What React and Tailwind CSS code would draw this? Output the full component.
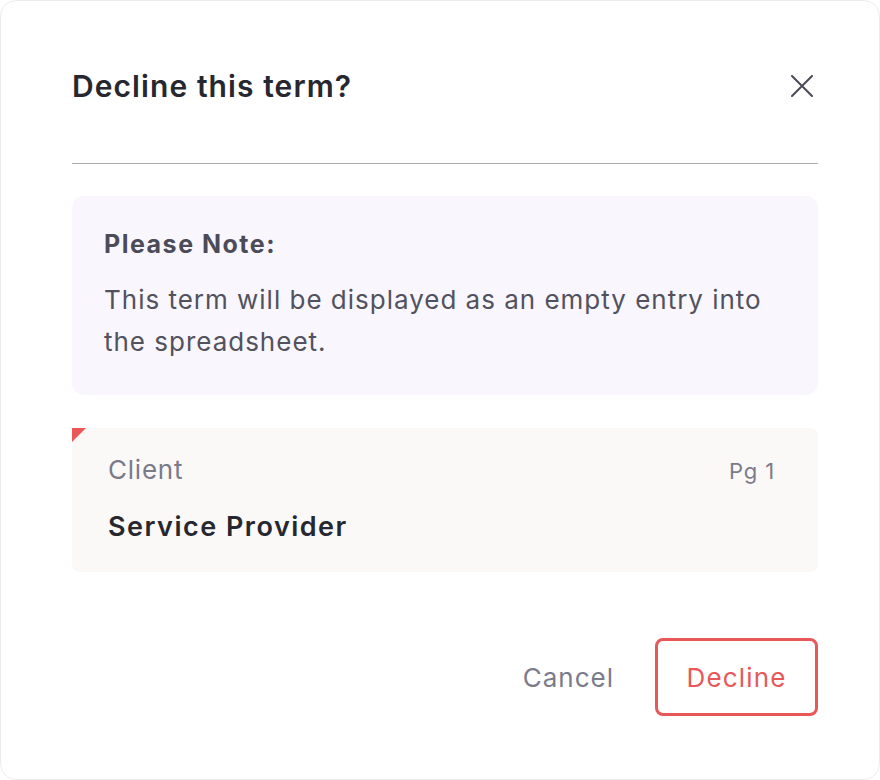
export default function App() {
  return (
    <div className="min-h-screen bg-white tracking-[0.048em]" style={{ fontFamily: "Inter, 'Noto Sans', sans-serif" }}>
      <div className="w-[880px] h-[780px] bg-white rounded-[16px] border border-[#ececec] pl-[71px] pr-[61px] pt-[67px] flex flex-col">
        {/* Header */}
        <div className="flex items-center justify-between">
          <h2 className="text-[30px] leading-[36px] font-semibold tracking-[0.036em] text-[#27272f]">
            Decline this term?
          </h2>
          <button type="button" className="mr-[5px] text-[#4a4a58]">
            <svg width="22" height="22" viewBox="0 0 22 22" fill="none" stroke="currentColor" strokeWidth="2" strokeLinecap="round">
              <path d="M1 1L21 21M21 1L1 21" />
            </svg>
          </button>
        </div>

        <div className="mt-[59px] h-px bg-[#a9a9b0]" />

        {/* Note */}
        <div className="mt-[32px] bg-[#f9f6fd] rounded-[12px] px-[32px] pt-[32px] pb-[32px]">
          <p className="text-[25px] leading-[32px] font-bold tracking-[0.06em] text-[#4b4b59]">Please Note:</p>
          <p className="mt-[19px] text-[26px] leading-[42px] tracking-[0.038em] text-[#52525e]">
            This term will be displayed as an empty entry into the spreadsheet.
          </p>
        </div>

        {/* Term card */}
        <div className="relative mt-[33px] bg-[#faf9f8] rounded-[8px] pl-[36px] pr-[43px] pt-[24px] pb-[27px]">
          <div className="absolute top-0 left-0 w-0 h-0 border-t-[14px] border-t-[#ec5656] border-r-[14px] border-r-transparent" />
          <div className="flex items-baseline justify-between">
            <span className="text-[26px] leading-[36px] text-[#7a7a8a]">Client</span>
            <span className="text-[22px] leading-[36px] tracking-[0.04em] text-[#7a7a8a]">Pg 1</span>
          </div>
          <p className="mt-[20px] text-[27px] leading-[36px] font-semibold text-[#27272f] tracking-[0.055em]">
            Service Provider
          </p>
        </div>

        {/* Actions */}
        <div className="mt-[66px] flex items-center justify-end">
          <button type="button" className="mr-[41px] text-[26px] text-[#7b7b8c] tracking-[0.038em]">Cancel</button>
          <button
            type="button"
            className="w-[163px] h-[78px] border-[3px] border-[#e85858] rounded-[8px] text-[26px] text-[#e85858] tracking-[0.045em] flex items-center justify-center"
          >
            Decline
          </button>
        </div>
      </div>
    </div>
  );
}
